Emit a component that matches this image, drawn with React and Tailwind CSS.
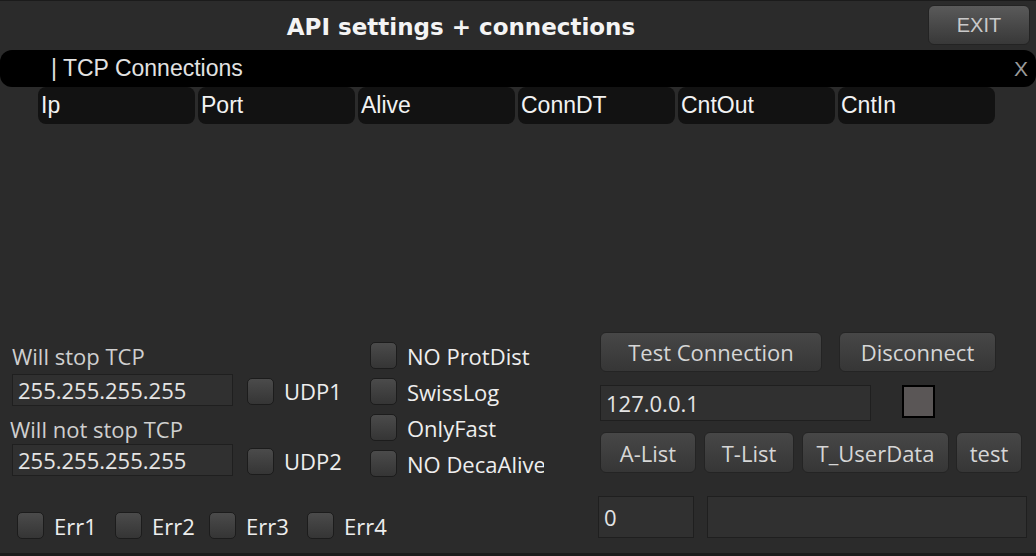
import React from 'react';

const seg = { fontFamily: '"Open Sans", "Noto Sans", sans-serif' };
const tah = { fontFamily: '"Liberation Sans", Arial, sans-serif' };

const columns = ['Ip', 'Port', 'Alive', 'ConnDT', 'CntOut', 'CntIn'];

const Check = () => (
  <div className="w-[27px] h-[27px] shrink-0 rounded-[5px] border border-[#1c1c1c] bg-gradient-to-b from-[#4b4b4b] to-[#353535]" />
);

const Btn = ({ children, className = '' }) => (
  <button
    className={`shrink-0 rounded-md border border-[#242424] bg-gradient-to-b from-[#474747] to-[#363636] text-[22px] text-[#d6d6d6] leading-none ${className}`}
    style={seg}
  >
    {children}
  </button>
);

const Field = ({ value, className = '' }) => (
  <div
    className={`shrink-0 flex items-center pl-[5px] bg-[#303030] border border-[#1f1f1f] text-[22px] text-[#e4e4e4] leading-none ${className}`}
    style={seg}
  >
    {value}
  </div>
);

const CheckRow = ({ label, className = '' }) => (
  <div className={`shrink-0 flex items-center gap-[10px] ${className}`}>
    <Check />
    <span className="text-[22px] text-[#eeeeee] leading-none whitespace-nowrap" style={seg}>{label}</span>
  </div>
);

export default function App() {
  return (
    <div className="w-[1036px] h-[556px] bg-[#2b2b2b] border-t border-b-[3px] border-[#1b1b1b] overflow-hidden flex flex-col">
      {/* title bar */}
      <div className="h-[49px] flex items-start shrink-0">
        <div className="flex-1 h-[52px] flex items-center justify-center pr-[6px]">
          <span className="text-[23px] font-bold text-[#f4f4f4]" style={{ fontFamily: '"DejaVu Sans", Verdana, sans-serif' }}>
            API settings + connections
          </span>
        </div>
        <button
          className="mt-[4px] mr-[6px] w-[102px] h-[40px] rounded-md border border-[#232323] bg-gradient-to-b from-[#5a5a5a] to-[#383838] text-[20px] text-[#c9c9c9]"
          style={tah}
        >
          EXIT
        </button>
      </div>

      {/* TCP connections bar */}
      <div className="h-[37px] shrink-0 bg-black rounded-xl flex items-center justify-between pl-[51px] pr-[8px]">
        <span className="text-[23px] text-[#e2e2e2]" style={tah}>| TCP Connections</span>
        <span className="text-[21px] text-[#9a9a9a]" style={tah}>X</span>
      </div>

      {/* table */}
      <div className="h-[245px] shrink-0 pl-[38px]">
        <div className="flex gap-[3px]">
          {columns.map((c) => (
            <div key={c} className="w-[157px] h-[37px] rounded-lg bg-[#121212] flex items-center pl-[3px] text-[23px] text-[#f2f2f2]" style={tah}>
              {c}
            </div>
          ))}
        </div>
      </div>

      {/* bottom area */}
      <div className="flex items-start">
        {/* left */}
        <div className="w-[358px] shrink-0 pl-[12px] flex flex-col">
          <div className="mt-[12px] h-[24px] leading-[24px] text-[22px] text-[#cfcfcf]" style={seg}>Will stop TCP</div>
          <div className="mt-[6px] flex items-center">
            <Field value="255.255.255.255" className="w-[221px] h-[32px]" />
            <CheckRow label="UDP1" className="ml-[14px] mt-[2px]" />
          </div>
          <div className="mt-[11px] -ml-[2px] h-[24px] leading-[24px] text-[22px] text-[#cfcfcf]" style={seg}>Will not stop TCP</div>
          <div className="mt-[3px] flex items-center">
            <Field value="255.255.255.255" className="w-[221px] h-[32px]" />
            <CheckRow label="UDP2" className="ml-[14px] mt-[2px]" />
          </div>
          <div className="mt-[36px] ml-[5px] flex">
            <CheckRow label="Err1" className="w-[98px]" />
            <CheckRow label="Err2" className="w-[94px]" />
            <CheckRow label="Err3" className="w-[98px]" />
            <CheckRow label="Err4" />
          </div>
        </div>

        {/* middle */}
        <div className="w-[174px] shrink-0 ml-[12px] mt-[10px] flex flex-col gap-[9px] overflow-hidden">
          <CheckRow label="NO ProtDist" />
          <CheckRow label="SwissLog" />
          <CheckRow label="OnlyFast" />
          <CheckRow label="NO DecaAlive" />
        </div>

        {/* right */}
        <div className="ml-[56px] flex flex-col">
          <div className="flex gap-[17px]">
            <Btn className="w-[222px] h-[40px]">Test Connection</Btn>
            <Btn className="w-[157px] h-[40px]">Disconnect</Btn>
          </div>
          <div className="mt-[13px] flex items-start">
            <Field value="127.0.0.1" className="w-[271px] h-[36px]" />
            <div className="ml-[31px] w-[33px] h-[33px] border-2 border-black bg-[#5a5656]" />
          </div>
          <div className="mt-[11px] flex gap-[8px]">
            <Btn className="w-[96px] h-[41px]">A-List</Btn>
            <Btn className="w-[90px] h-[41px]">T-List</Btn>
            <Btn className="w-[147px] h-[41px]">T_UserData</Btn>
            <Btn className="w-[66px] h-[41px] -ml-[1px]">test</Btn>
          </div>
          <div className="mt-[23px] -ml-[2px] flex gap-[13px]">
            <Field value="0" className="w-[96px] h-[42px] pl-[4px]" />
            <Field value="" className="w-[320px] h-[42px]" />
          </div>
        </div>
      </div>
    </div>
  );
}
